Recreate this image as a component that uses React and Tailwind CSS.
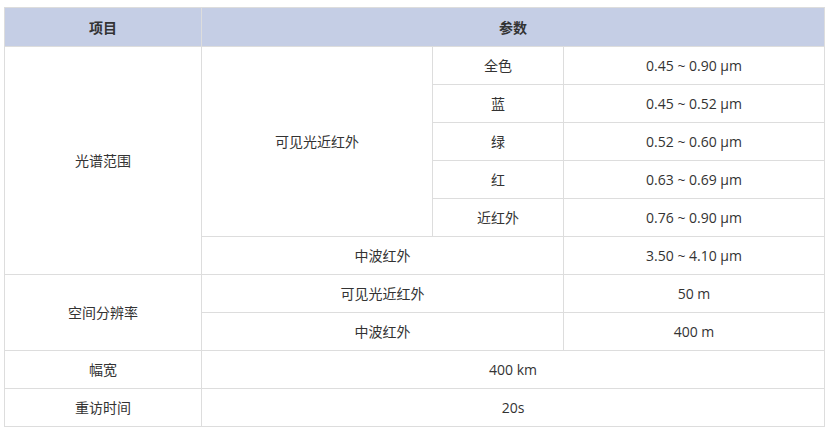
import React from 'react';

const cell = "border border-[#dddddd] text-center align-middle h-[38px] p-0";

export default function App() {
  return (
    <div className="w-[832px] h-[435px] bg-white pt-[7px] pl-[4px]" style={{ fontFamily: '"Open Sans", "Noto Sans CJK SC", sans-serif' }}>
      <table className="border-collapse table-fixed w-[820px] text-[14px] text-[#333333]">
        <colgroup>
          <col className="w-[197px]" />
          <col className="w-[231px]" />
          <col className="w-[131px]" />
          <col className="w-[261px]" />
        </colgroup>
        <thead>
          <tr className="bg-[#c5cee5]">
            <th className={`${cell} h-[39px] font-bold`}>项目</th>
            <th colSpan={3} className={`${cell} h-[39px] font-bold`}>参数</th>
          </tr>
        </thead>
        <tbody>
          <tr>
            <td rowSpan={6} className={cell}>光谱范围</td>
            <td rowSpan={5} className={cell}>可见光近红外</td>
            <td className={cell}>全色</td>
            <td className={cell}>0.45 ~ 0.90 μm</td>
          </tr>
          <tr>
            <td className={cell}>蓝</td>
            <td className={cell}>0.45 ~ 0.52 μm</td>
          </tr>
          <tr>
            <td className={cell}>绿</td>
            <td className={cell}>0.52 ~ 0.60 μm</td>
          </tr>
          <tr>
            <td className={cell}>红</td>
            <td className={cell}>0.63 ~ 0.69 μm</td>
          </tr>
          <tr>
            <td className={cell}>近红外</td>
            <td className={cell}>0.76 ~ 0.90 μm</td>
          </tr>
          <tr>
            <td colSpan={2} className={cell}>中波红外</td>
            <td className={cell}>3.50 ~ 4.10 μm</td>
          </tr>
          <tr>
            <td rowSpan={2} className={cell}>空间分辨率</td>
            <td colSpan={2} className={cell}>可见光近红外</td>
            <td className={cell}>50 m</td>
          </tr>
          <tr>
            <td colSpan={2} className={cell}>中波红外</td>
            <td className={cell}>400 m</td>
          </tr>
          <tr>
            <td className={cell}>幅宽</td>
            <td colSpan={3} className={cell}>400 km</td>
          </tr>
          <tr>
            <td className={cell}>重访时间</td>
            <td colSpan={3} className={cell}>20s</td>
          </tr>
        </tbody>
      </table>
    </div>
  );
}
